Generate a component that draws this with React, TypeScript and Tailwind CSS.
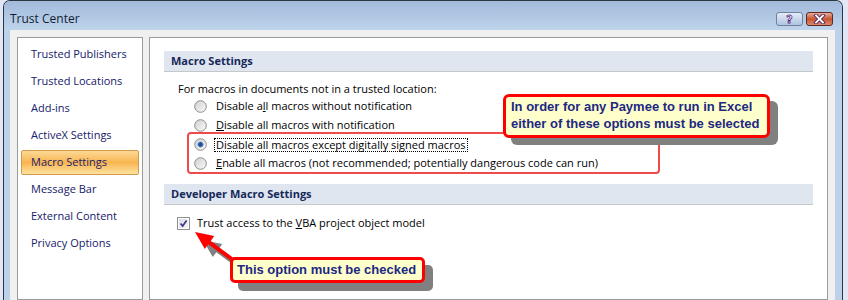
import React from 'react';

const NAV = [
  'Trusted Publishers',
  'Trusted Locations',
  'Add-ins',
  'ActiveX Settings',
  'Macro Settings',
  'Message Bar',
  'External Content',
  'Privacy Options',
];

function Radio({ checked }: { checked?: boolean }) {
  return (
    <svg width="13" height="13" viewBox="0 0 13 13" className="shrink-0">
      <defs>
        <linearGradient id="radioFill" x1="0" y1="0" x2="1" y2="1">
          <stop offset="0" stopColor="#cfcfcf" />
          <stop offset="1" stopColor="#fbfbfb" />
        </linearGradient>
      </defs>
      <circle cx="6.5" cy="6.5" r="5.8" fill="url(#radioFill)" stroke="#8d8d8d" />
      {checked && <circle cx="6.5" cy="6.5" r="2.8" fill="#1d4f9c" stroke="#9cbbe6" strokeWidth="0.8" />}
    </svg>
  );
}

function Checkbox() {
  return (
    <svg width="13" height="13" viewBox="0 0 13 13" className="shrink-0">
      <defs>
        <linearGradient id="cbFill" x1="0" y1="0" x2="1" y2="1">
          <stop offset="0" stopColor="#d8dbe2" />
          <stop offset="1" stopColor="#f7f7f8" />
        </linearGradient>
      </defs>
      <rect x="0.5" y="0.5" width="12" height="12" fill="#fff" stroke="#8e8f8f" />
      <rect x="2" y="2" width="9" height="9" fill="url(#cbFill)" />
      <path d="M3.6 6.4 L5.6 9 L9.6 3.4" fill="none" stroke="#3f348f" strokeWidth="1.7" />
    </svg>
  );
}

function Option({ children, checked, focused }: { children: React.ReactNode; checked?: boolean; focused?: boolean }) {
  return (
    <div className="h-[19px] flex items-center pl-[44px] gap-[9px]">
      <Radio checked={checked} />
      {focused ? (
        <span className="-ml-[2px] px-[1px] leading-[12px] border border-dotted border-black">{children}</span>
      ) : (
        <span>{children}</span>
      )}
    </div>
  );
}

function SectionHeader({ title }: { title: string }) {
  return (
    <div className="mx-[14px] h-[21px] bg-[#dfe6ef] border-b border-[#c5c7ca] flex items-center pl-[7px] font-bold text-[#16285a]">
      {title}
    </div>
  );
}

export default function App() {
  return (
    <div className="relative w-[848px] h-[300px] overflow-hidden bg-[#e2e7f6] font-['Open_Sans',sans-serif] text-[11px] text-black">
      {/* WINDOW */}
      <div className="ml-[3px] w-[840px] h-[300px] flex flex-col border-x border-t border-[#2c3643] rounded-t-[7px] bg-[#bcd2ea]">
        {/* TITLE BAR */}
        <div className="h-[29px] shrink-0 flex items-center justify-between pl-[6px] pr-[9px] rounded-t-[6px] bg-gradient-to-b from-[#a2badb] to-[#bed4eb]">
          <span className="text-[12px] text-[#111d33] mt-[7px]">Trust Center</span>
          <div className="flex gap-[3px] mt-[7px]">
            <div className="w-[27px] h-[14px] rounded-[3px] border border-[#6f819c] bg-gradient-to-b from-[#e4ecf7] via-[#c9d8ec] to-[#aec4e0] flex items-center justify-center">
              <span className="font-['DejaVu_Sans',sans-serif] font-bold text-[11px] leading-none text-white [-webkit-text-stroke:0.8px_#5b2c86]">?</span>
            </div>
            <div className="w-[27px] h-[14px] rounded-[3px] border border-[#5b2a24] bg-gradient-to-b from-[#e9ad95] via-[#c7522f] to-[#dc8a6b] flex items-center justify-center">
              <svg width="13" height="10" viewBox="0 0 13 10">
                <path d="M3 1.5 L10 8.5 M10 1.5 L3 8.5" stroke="#4b2466" strokeWidth="3.6" strokeLinecap="square" />
                <path d="M3 1.5 L10 8.5 M10 1.5 L3 8.5" stroke="#ffffff" strokeWidth="1.8" strokeLinecap="square" />
              </svg>
            </div>
          </div>
        </div>

        {/* CLIENT AREA */}
        <div className="flex-1 ml-[6px] mr-[7px] bg-[#f0f0f0] flex gap-[6px] px-[7px] pt-[7px]">
          {/* SIDEBAR */}
          <div className="w-[126px] shrink-0 border border-[#9a9b9c] bg-white pt-[4px]">
            {NAV.map((item) =>
              item === 'Macro Settings' ? (
                <div
                  key={item}
                  className="mx-[3px] mb-[2px] h-[25px] flex items-center pl-[9px] rounded-[2px] border border-[#d49a4a] bg-gradient-to-b from-[#fcd995] via-[#f8b54f] to-[#fde39d] text-[#1a1c6b]"
                >
                  {item}
                </div>
              ) : (
                <div key={item} className="mx-[3px] mb-[2px] h-[25px] flex items-center pl-[10px] text-[#16206a]">
                  {item}
                </div>
              )
            )}
          </div>

          {/* MAIN PANEL */}
          <div className="w-[679px] shrink-0 border border-[#9a9b9c] bg-white pt-[13px]">
            <SectionHeader title="Macro Settings" />
            <div className="mt-[9px] h-[16px] flex items-center pl-[28px]">
              For macros in documents not in a trusted location:
            </div>
            <Option>
              Disable a<u>l</u>l macros without notification
            </Option>
            <Option>
              <u>D</u>isable all macros with notification
            </Option>
            <Option checked focused>
              Disable all macros except di<u>g</u>itally signed macros
            </Option>
            <Option>
              <u>E</u>nable all macros (not recommended; potentially dangerous code can run)
            </Option>

            <div className="mt-[11px]">
              <SectionHeader title="Developer Macro Settings" />
            </div>
            <div className="mt-[8px] h-[21px] flex items-center pl-[27px] gap-[7px]">
              <Checkbox />
              <span>
                Trust access to the <u>V</u>BA project object model
              </span>
            </div>
          </div>
        </div>
      </div>

      {/* ANNOTATIONS */}
      <div className="absolute left-[187px] top-[132px] w-[473px] h-[42px] rounded-[4px] border-2 border-[#f04b4b]" />

      <div className="absolute left-[511px] top-[101px] w-[267px] h-[44px] rounded-[6px] bg-[#808080]" />
      <div className="absolute left-[503px] top-[94px] w-[267px] h-[44px] rounded-[6px] border-[3px] border-[#ff0000] bg-[#ffffcc] pl-[5px] pt-[1px] font-['Liberation_Sans',Arial,sans-serif] font-bold text-[13px] leading-[17px] text-[#1c2882]">
        <div>In order for any Paymee to run in Excel</div>
        <div>either of these options must be selected</div>
      </div>

      <div className="absolute left-[238px] top-[265px] w-[195px] h-[26px] rounded-[5px] bg-[#808080]" />
      <svg className="absolute left-0 top-0 pointer-events-none" width="848" height="300">
        <polygon
          transform="translate(8 8)"
          fill="#808080"
          points="195,232 214.2,236.1 210.7,241 234.2,258.4 231.8,261.6 208.3,244.2 204.8,249.1"
        />
        <polygon
          fill="#ff0000"
          points="195,232 214.2,236.1 210.7,241 234.2,258.4 231.8,261.6 208.3,244.2 204.8,249.1"
        />
      </svg>
      <div className="absolute left-[230px] top-[257px] w-[195px] h-[26px] rounded-[5px] border-[3px] border-[#ff0000] bg-[#ffffcc] pl-[4px] flex items-center font-['Liberation_Sans',Arial,sans-serif] font-bold text-[13px] text-[#1c2882]">
        This option must be checked
      </div>
    </div>
  );
}
